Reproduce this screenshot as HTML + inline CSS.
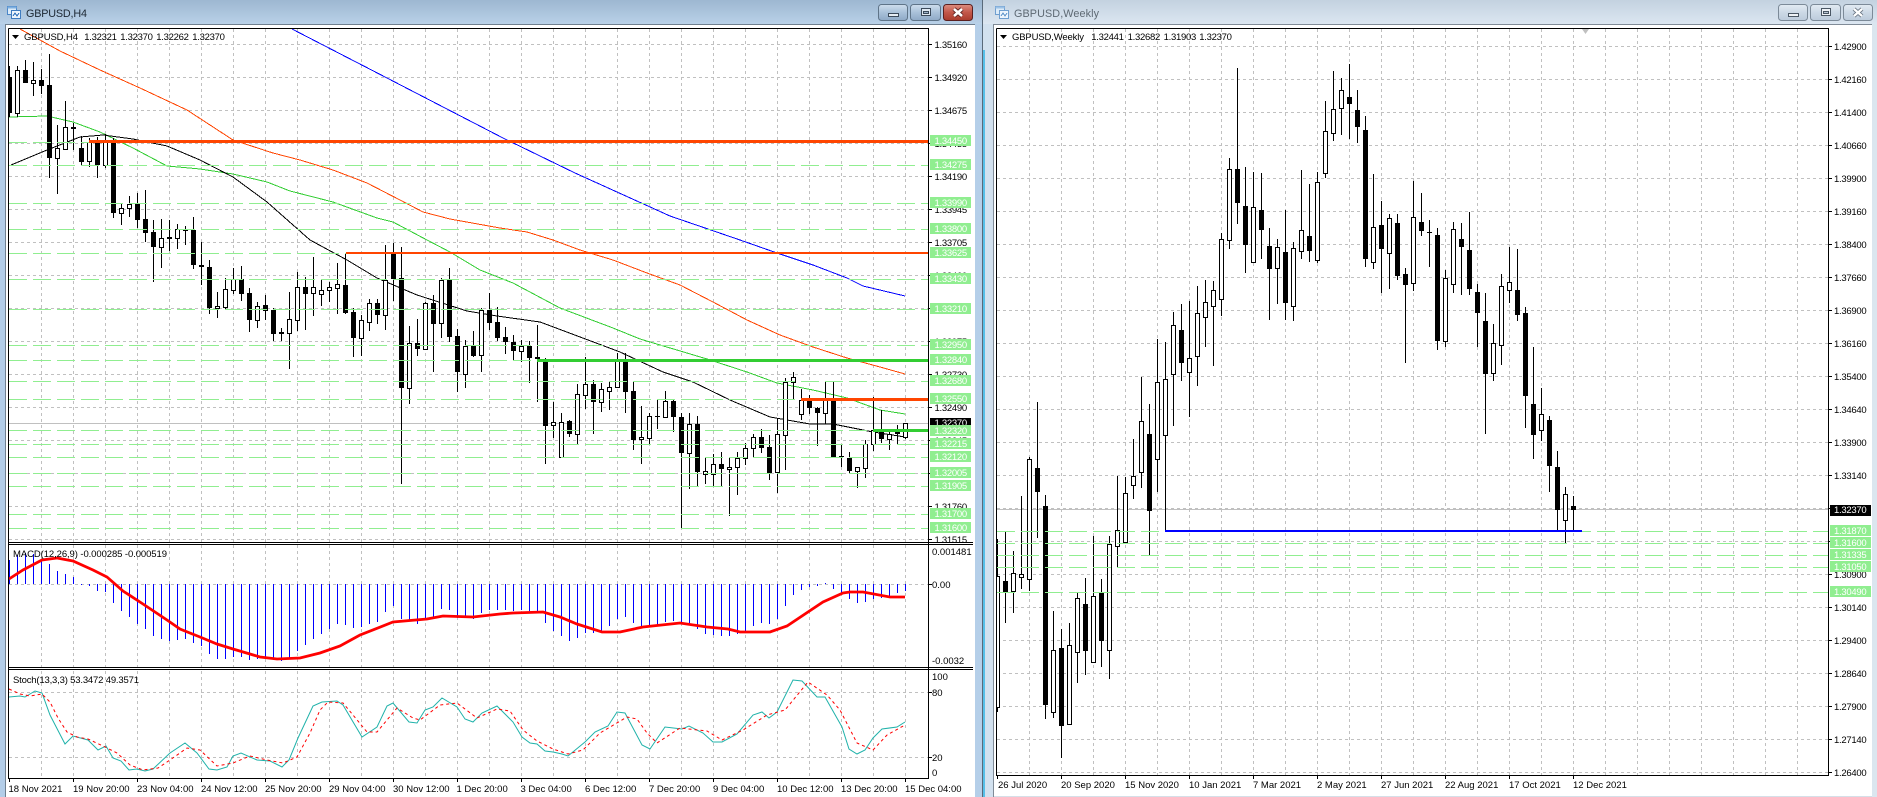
<!DOCTYPE html>
<html><head><meta charset="utf-8"><title>GBPUSD</title>
<style>
html,body{margin:0;padding:0;background:#fff;width:1877px;height:797px;overflow:hidden}
svg{display:block}
text{font-family:"Liberation Sans",sans-serif;font-size:9.5px;fill:#000}
.p{letter-spacing:-.28px}
.w{fill:#fff}
.c{shape-rendering:crispEdges}
.s{fill:none;stroke-width:1}
</style></head><body>
<svg width="1877" height="797" viewBox="0 0 1877 797" xmlns="http://www.w3.org/2000/svg">
<defs>
<linearGradient id="ta" x1="0" y1="0" x2="0" y2="1"><stop offset="0" stop-color="#9db7d1"/><stop offset="1" stop-color="#b9d1e8"/></linearGradient>
<linearGradient id="ti" x1="0" y1="0" x2="0" y2="1"><stop offset="0" stop-color="#c3d2e0"/><stop offset="1" stop-color="#dbe6f1"/></linearGradient>
<linearGradient id="b" x1="0" y1="0" x2="0" y2="1"><stop offset="0" stop-color="#cfdeed"/><stop offset=".5" stop-color="#a9c1d9"/><stop offset="1" stop-color="#8ea9c6"/></linearGradient>
<linearGradient id="bi" x1="0" y1="0" x2="0" y2="1"><stop offset="0" stop-color="#e3ebf3"/><stop offset=".5" stop-color="#ccd9e6"/><stop offset="1" stop-color="#bccbdb"/></linearGradient>
<linearGradient id="r" x1="0" y1="0" x2="0" y2="1"><stop offset="0" stop-color="#dd8d80"/><stop offset=".5" stop-color="#c2574a"/><stop offset="1" stop-color="#a93b2d"/></linearGradient>
<pattern id="v1" patternUnits="userSpaceOnUse" x="41" y="29" width="32" height="6"><rect x="0" y="0" width="1" height="3" fill="#c0c0c0"/></pattern>
<pattern id="h1" patternUnits="userSpaceOnUse" x="9" y="44" width="6" height="33"><rect x="0" y="0" width="3" height="1" fill="#c0c0c0"/></pattern>
<pattern id="v2" patternUnits="userSpaceOnUse" x="1029" y="29" width="32" height="6"><rect x="0" y="0" width="1" height="3" fill="#c0c0c0"/></pattern>
<pattern id="h2" patternUnits="userSpaceOnUse" x="997" y="46" width="6" height="33"><rect x="0" y="0" width="3" height="1" fill="#c0c0c0"/></pattern>
</defs>

<!-- window chrome -->
<rect width="1877" height="797" fill="#fff"/>
<rect x="0" y="0" width="983" height="24" fill="url(#ta)"/>
<rect x="983" y="0" width="894" height="24" fill="url(#ti)"/>
<g class="c">
<rect x="0" y="24" width="5" height="773" fill="#b3cde8"/>
<rect x="5" y="24" width="1" height="773" fill="#6f7f8f"/>
<rect x="5" y="24" width="970" height="1" fill="#6f7f8f"/>
<rect x="975" y="24" width="7" height="773" fill="#b5cfe9"/>
<rect x="982" y="0" width="1" height="797" fill="#5a6a7a"/>
<rect x="983" y="24" width="10" height="773" fill="#d2e1ef"/>
<rect x="983" y="50" width="2" height="747" fill="#55bfe8"/>
<rect x="993" y="24" width="1" height="773" fill="#808b97"/>
<rect x="993" y="24" width="879" height="1" fill="#808b97"/>
<rect x="1872" y="24" width="5" height="773" fill="#dbe6ef"/>
<rect x="994" y="796" width="878" height="1" fill="#d5dfe8"/>
</g>

<!-- icons -->
<g class="c">
<rect x="7.5" y="6.5" width="9" height="8" fill="#dcebf8" stroke="#4a86c8"/>
<rect x="11.5" y="10.5" width="9" height="8" fill="#eef6fd" stroke="#3f7cc0"/>
<path d="M13 16l2-3 2 3 2-3" fill="none" stroke="#3f7cc0"/>
<rect x="7.5" y="6.5" width="9" height="2" fill="#7fb0e0"/>
<rect x="955.5" y="6.5" width="0" height="0"/>
<rect x="995.5" y="6.5" width="9" height="8" fill="#dcebf8" stroke="#6f9fd0"/>
<rect x="999.5" y="10.5" width="9" height="8" fill="#eef6fd" stroke="#6f9fd0"/>
<path d="M1001 16l2-3 2 3 2-3" fill="none" stroke="#6f9fd0"/>
<rect x="995.5" y="6.5" width="9" height="2" fill="#9cc2e6"/>
</g>

<!-- window titles -->
<text x="26" y="17" style="font-size:10.8px;fill:#1c2733" textLength="61">GBPUSD,H4</text>
<text x="1014" y="17" style="font-size:10.8px;fill:#5e6973" textLength="85">GBPUSD,Weekly</text>

<!-- buttons left -->
<rect x="878.5" y="4.5" width="29" height="16" rx="3" fill="url(#b)" stroke="#5f7488"/>
<rect x="888.5" y="13.5" width="10" height="3" fill="#e6edf4" stroke="#3b4a5a" class="c"/>
<rect x="910.5" y="4.5" width="30" height="16" rx="3" fill="url(#b)" stroke="#5f7488"/>
<rect x="921.5" y="8.5" width="9" height="7" fill="#dfe8f1" stroke="#3b4a5a" class="c"/>
<rect x="923.5" y="11.5" width="5" height="2" fill="#9db4cb" stroke="#3b4a5a" class="c"/>
<rect x="943.5" y="4.5" width="29" height="16" rx="3" fill="url(#r)" stroke="#5a2020"/>
<path d="M954 9l8 7M962 9l-8 7" stroke="#5a2020" stroke-width="4.4" fill="none"/>
<path d="M954 9l8 7M962 9l-8 7" stroke="#fff" stroke-width="2.6" fill="none"/>

<!-- buttons right -->
<rect x="1778.5" y="4.5" width="29" height="16" rx="3" fill="url(#bi)" stroke="#7c8a98"/>
<rect x="1788.5" y="13.5" width="10" height="3" fill="#eef2f6" stroke="#4a5764" class="c"/>
<rect x="1810.5" y="4.5" width="30" height="16" rx="3" fill="url(#bi)" stroke="#7c8a98"/>
<rect x="1821.5" y="8.5" width="9" height="7" fill="#eef2f6" stroke="#4a5764" class="c"/>
<rect x="1823.5" y="11.5" width="5" height="2" fill="#b8c6d4" stroke="#4a5764" class="c"/>
<rect x="1843.5" y="4.5" width="29" height="16" rx="3" fill="url(#bi)" stroke="#7c8a98"/>
<path d="M1854 9l8 7M1862 9l-8 7" stroke="#6b7785" stroke-width="4" fill="none"/>
<path d="M1854 9l8 7M1862 9l-8 7" stroke="#fff" stroke-width="2.2" fill="none"/>

<!-- LEFT grids -->
<rect x="41" y="29" width="887" height="513" fill="url(#v1)"/>
<rect x="9" y="29" width="919" height="513" fill="url(#h1)"/>
<rect x="41" y="545" width="887" height="122" fill="url(#v1)"/>
<rect x="41" y="670" width="887" height="108" fill="url(#v1)"/>
<path class="c" d="M9 584.5H928M9 692.5H928M9 757.5H928" stroke="#c0c0c0" stroke-dasharray="3 3" fill="none"/>

<!-- LEFT price line -->
<path class="c" d="M9 423.5H928" stroke="#c0c0c0" fill="none"/>

<!-- LEFT MAs -->
<polyline class="s c" stroke="#0000ff" points="292,29 387,78 503,138 575,173 670,216 740,240 777,253 813,265 847,278 863,286 905,296"/>
<polyline class="s c" stroke="#ff4500" points="20,29 60,51 100,70 140,88 187,110 233,140 273,153 300,160 333,170 367,183 400,200 423,212 450,219 500,228 527,232 553,240 580,250 613,260 647,273 680,285 713,302 747,320 780,335 813,347 847,358 880,367 905,374"/>
<polyline class="s c" stroke="#32cd32" points="9,117 47,116 73,122 100,132 133,148 167,166 200,169 233,174 267,182 290,191 333,202 377,218 393,222 427,240 450,252 480,270 513,283 560,308 613,328 640,339 707,359 747,372 777,383 813,390 847,398 880,410 905,414"/>
<polyline class="s c" stroke="#000" points="11,165 47,150 80,137 103,135 133,139 167,146 200,160 233,177 267,202 310,240 347,260 377,278 417,295 467,311 497,316 540,322 580,337 620,352 663,372 693,382 730,400 770,417 810,424 833,424 873,432 905,437"/>

<!-- LEFT candles -->
<path class="c" fill="none" stroke="#000" d="M9.5 66V117M17.5 66V117M25.5 60V83M33.5 62V96M41.5 69V94M49.5 54V178M57.5 125V194M65.5 101V150M73.5 123V150M81.5 136V165M89.5 138V167M97.5 137V178M105.5 134V168M113.5 138V218M121.5 203V225M129.5 196V217M137.5 193V228M145.5 190V242M153.5 220V282M161.5 219V268M169.5 220V251M177.5 224V249M185.5 226V245M193.5 217V269M201.5 242V285M209.5 260V314M217.5 292V318M225.5 278V309M233.5 268V294M241.5 266V301M249.5 288V332M257.5 302V328M265.5 295V320M273.5 308V341M281.5 328V341M289.5 292V369M297.5 272V331M305.5 277V330M313.5 257V316M321.5 279V306M329.5 282V302M337.5 263V314M345.5 253V314M353.5 308V357M361.5 315V356M369.5 299V331M377.5 299V324M385.5 245V330M393.5 243V301M401.5 247V484M409.5 326V404M417.5 319V356M425.5 302V350M433.5 295V372M441.5 278V338M449.5 268V342M457.5 329V392M465.5 340V388M473.5 331V357M481.5 308V372M489.5 293V330M497.5 307V341M505.5 327V354M513.5 335V360M521.5 340V362M529.5 341V383M537.5 325V402M545.5 358V464M553.5 402V438M561.5 413V457M569.5 420V437M577.5 384V444M585.5 357V409M593.5 380V434M601.5 383V412M609.5 382V410M617.5 353V388M625.5 353V413M633.5 382V450M641.5 406V464M649.5 413V445M657.5 400V429M665.5 391V417M673.5 400V432M681.5 413V528M689.5 413V489M697.5 416V487M705.5 458V484M713.5 454V486M721.5 452V486M729.5 458V516M737.5 452V495M745.5 443V465M753.5 434V457M761.5 429V453M769.5 435V480M777.5 418V493M785.5 378V470M793.5 372V399M801.5 389V420M809.5 395V414M817.5 407V446M825.5 382V424M833.5 382V458M841.5 445V467M849.5 452V473M857.5 467V488M865.5 440V478M873.5 397V451M881.5 410V443M889.5 430V450M897.5 425V444M905.5 423V439"/>
<path class="c" fill="#000" d="M9 77h3v36h-3zM23 70h5v13h-5zM39 80h5v6h-5zM47 85h5v73h-5zM71 127h5v2h-5zM79 148h5v14h-5zM95 142h5v23h-5zM111 142h5v71h-5zM135 204h5v16h-5zM143 219h5v14h-5zM151 232h5v15h-5zM167 237h5v2h-5zM183 230h5v1h-5zM191 230h5v35h-5zM199 265h5v2h-5zM207 267h5v41h-5zM239 279h5v15h-5zM247 293h5v27h-5zM263 305h5v6h-5zM271 310h5v24h-5zM279 332h5v2h-5zM303 287h5v7h-5zM343 285h5v28h-5zM351 312h5v26h-5zM375 303h5v12h-5zM391 253h5v26h-5zM399 278h5v110h-5zM415 343h5v6h-5zM431 303h5v21h-5zM447 280h5v57h-5zM455 336h5v36h-5zM471 346h5v10h-5zM487 310h5v13h-5zM495 322h5v16h-5zM503 337h5v5h-5zM511 342h5v9h-5zM527 346h5v12h-5zM535 357h5v2h-5zM543 360h5v66h-5zM567 421h5v13h-5zM591 384h5v18h-5zM623 362h5v30h-5zM631 391h5v49h-5zM655 416h5v1h-5zM671 401h5v16h-5zM679 417h5v36h-5zM695 424h5v48h-5zM719 464h5v5h-5zM759 437h5v11h-5zM767 447h5v26h-5zM807 400h5v8h-5zM815 408h5v5h-5zM831 400h5v57h-5zM839 456h5v1h-5zM847 458h5v13h-5zM879 432h5v7h-5z"/>
<path class="c" fill="#fff" stroke="#000" d="M15.5 70.5h4v43h-4zM31.5 80.5h4v3h-4zM55.5 148.5h4v10h-4zM63.5 127.5h4v22h-4zM87.5 142.5h4v19h-4zM103.5 142.5h4v23h-4zM119.5 208.5h4v5h-4zM127.5 204.5h4v4h-4zM159.5 238.5h4v9h-4zM175.5 229.5h4v9h-4zM215.5 306.5h4v2h-4zM223.5 289.5h4v18h-4zM231.5 279.5h4v11h-4zM255.5 306.5h4v14h-4zM287.5 319.5h4v14h-4zM295.5 287.5h4v33h-4zM311.5 287.5h4v6h-4zM319.5 290.5h4v4h-4zM327.5 287.5h4v3h-4zM335.5 284.5h4v4h-4zM359.5 320.5h4v18h-4zM367.5 303.5h4v19h-4zM383.5 280.5h4v35h-4zM407.5 343.5h4v45h-4zM423.5 303.5h4v46h-4zM439.5 280.5h4v43h-4zM463.5 346.5h4v28h-4zM479.5 310.5h4v45h-4zM519.5 346.5h4v5h-4zM551.5 422.5h4v3h-4zM559.5 422.5h4v35h-4zM575.5 394.5h4v40h-4zM583.5 384.5h4v11h-4zM599.5 389.5h4v13h-4zM607.5 387.5h4v4h-4zM615.5 360.5h4v27h-4zM639.5 437.5h4v2h-4zM647.5 416.5h4v22h-4zM663.5 401.5h4v16h-4zM687.5 424.5h4v29h-4zM703.5 471.5h4v3h-4zM711.5 464.5h4v10h-4zM727.5 467.5h4v2h-4zM735.5 458.5h4v9h-4zM743.5 448.5h4v10h-4zM751.5 437.5h4v11h-4zM775.5 434.5h4v38h-4zM783.5 382.5h4v53h-4zM791.5 377.5h4v5h-4zM799.5 400.5h4v14h-4zM823.5 400.5h4v13h-4zM855.5 467.5h4v4h-4zM863.5 444.5h4v24h-4zM871.5 430.5h4v14h-4zM887.5 434.5h4v5h-4zM895.5 432.5h4v1h-4zM903.5 423.5h4v14h-4z"/>

<!-- LEFT levels -->
<path class="c" fill="none" stroke="#90ee90" stroke-dasharray="18 6" d="M9 142.5H928M9 165.5H928M9 203.5H928M9 229.5H928M9 253.5H928M9 279.5H928M9 309.5H928M9 345.5H928M9 360.5H928M9 381.5H928M9 399.5H928M9 430.5H928M9 444.5H928M9 457.5H928M9 473.5H928M9 486.5H928M9 514.5H928M9 528.5H928"/>
<g class="c">
<rect x="89" y="140" width="839" height="3" fill="#ff4500"/>
<rect x="346" y="252" width="582" height="2" fill="#ff4500"/>
<rect x="537" y="359" width="391" height="3" fill="#32cd32"/>
<rect x="801" y="398" width="127" height="3" fill="#ff4500"/>
<rect x="873" y="429" width="55" height="3" fill="#32cd32"/>
</g>

<!-- MACD -->
<path class="c" fill="none" stroke="#0000ff" d="M9.5 584V560M17.5 584V555M25.5 584V553M33.5 584V554M41.5 584V559M49.5 584V564M57.5 584V571M65.5 584V574M73.5 584V577M81.5 584V585M89.5 584V586M97.5 584V591M105.5 584V592M113.5 584V603M121.5 584V611M129.5 584V617M137.5 584V624M145.5 584V629M153.5 584V636M161.5 584V639M169.5 584V641M177.5 584V640M185.5 584V639M193.5 584V643M201.5 584V646M209.5 584V654M217.5 584V659M225.5 584V659M233.5 584V657M241.5 584V657M249.5 584V660M257.5 584V659M265.5 584V658M273.5 584V660M281.5 584V661M289.5 584V659M297.5 584V651M305.5 584V645M313.5 584V639M321.5 584V634M329.5 584V629M337.5 584V624M345.5 584V625M353.5 584V628M361.5 584V627M369.5 584V624M377.5 584V622M385.5 584V612M393.5 584V606M401.5 584V619M409.5 584V620M417.5 584V624M425.5 584V619M433.5 584V618M441.5 584V609M449.5 584V610M457.5 584V618M465.5 584V617M473.5 584V619M481.5 584V613M489.5 584V610M497.5 584V610M505.5 584V610M513.5 584V611M521.5 584V610M529.5 584V611M537.5 584V612M545.5 584V623M553.5 584V631M561.5 584V636M569.5 584V641M577.5 584V638M585.5 584V633M593.5 584V633M601.5 584V631M609.5 584V626M617.5 584V619M625.5 584V617M633.5 584V623M641.5 584V626M649.5 584V627M657.5 584V625M665.5 584V622M673.5 584V621M681.5 584V623M689.5 584V623M697.5 584V629M705.5 584V634M713.5 584V635M721.5 584V636M729.5 584V636M737.5 584V634M745.5 584V632M753.5 584V626M761.5 584V623M769.5 584V624M777.5 584V619M785.5 584V606M793.5 584V595M801.5 584V590M809.5 584V587M817.5 584V586M825.5 584V583M833.5 584V589M841.5 584V593M849.5 584V599M857.5 584V603M865.5 584V602M873.5 584V599M881.5 584V598M889.5 584V597M897.5 584V593M905.5 584V591"/>
<polyline fill="none" stroke="#ff0000" stroke-width="2.8" points="9,579 23,570 42,560 57,558 73,561 93,570 107,577 123,591 143,604 167,620 180,629 200,637 217,644 233,649 260,657 277,659 300,658 320,653 340,646 360,635 393,622 427,619 443,616 473,617 500,614 513,613 543,612 560,617 577,624 602,632 620,632 643,627 680,623 707,627 728,629 740,632 770,632 787,626 823,602 843,593 850,592 863,592 890,597 905,597"/>

<!-- Stoch -->
<polyline class="s" stroke="#20b2aa" points="9,697 20,696 25,697 35,691 42,693 50,715 65,744 73,736 88,740 98,750 106,746 113,758 121,761 129,770 137,769 145,771 153,769 170,753 185,743 197,753 209,769 217,770 227,767 233,756 241,753 257,760 270,761 282,767 289,760 298,738 313,706 322,702 337,701 343,705 362,737 377,727 387,706 393,703 409,722 417,723 425,710 433,707 442,698 457,707 465,719 473,722 482,713 497,706 513,722 522,737 530,743 537,744 545,751 553,752 562,754 568,756 585,742 595,732 608,726 617,712 625,713 642,745 650,749 665,727 682,729 689,726 703,733 713,742 722,742 737,734 753,715 762,712 769,718 777,712 793,680 802,681 817,697 825,697 842,727 849,749 857,754 865,750 873,738 882,729 897,727 905,722"/>
<polyline class="s" stroke="#ff0000" stroke-dasharray="3 3" points="9,689 20,694 30,696 42,694 50,702 58,718 67,732 77,737 88,739 103,746 117,753 130,765 143,770 158,768 170,760 187,748 200,750 217,766 233,763 250,756 267,760 283,763 297,757 310,733 320,710 328,702 343,703 353,715 367,732 377,732 397,708 413,718 420,720 440,705 457,703 477,718 497,709 510,711 523,730 537,741 553,749 568,754 583,750 600,733 627,717 637,719 647,733 657,743 680,728 707,731 722,740 743,730 767,715 785,710 808,682 827,695 840,710 857,743 873,750 887,735 905,725"/>

<!-- LEFT frame -->
<path class="c" fill="none" stroke="#000" d="M8.5 28.5H928.5V778.5H8.5V28.5M8 542.5H973M8 544.5H973M8 667.5H973M8 669.5H973M928 44.5h4M928 77.5h4M928 110.5h4M928 143.5h4M928 176.5h4M928 209.5h4M928 242.5h4M928 275.5h4M928 308.5h4M928 341.5h4M928 374.5h4M928 407.5h4M928 440.5h4M928 473.5h4M928 506.5h4M928 539.5h4M928 584.5h4M928 692.5h4M928 757.5h4M9.5 778v4M73.5 778v4M137.5 778v4M201.5 778v4M265.5 778v4M329.5 778v4M393.5 778v4M457.5 778v4M521.5 778v4M585.5 778v4M649.5 778v4M713.5 778v4M777.5 778v4M841.5 778v4M905.5 778v4"/>

<!-- LEFT legends -->
<polygon points="12,35 19,35 15.5,39" fill="#000"/>
<text x="24" y="40" textLength="54">GBPUSD,H4</text>
<text class="p" x="84.3" y="40">1.32321</text>
<text class="p" x="120.3" y="40">1.32370</text>
<text class="p" x="156.3" y="40">1.32262</text>
<text class="p" x="192.3" y="40">1.32370</text>
<text x="13" y="557" textLength="154">MACD(12,26,9) -0.000285 -0.000519</text>
<text x="13" y="683" textLength="126">Stoch(13,3,3) 53.3472 49.3571</text>

<!-- LEFT axis labels -->
<g class="p">
<text x="934.5" y="48">1.35160</text>
<text x="934.5" y="81">1.34920</text>
<text x="934.5" y="114">1.34675</text>
<text x="934.5" y="147">1.34435</text>
<text x="934.5" y="180">1.34190</text>
<text x="934.5" y="213">1.33945</text>
<text x="934.5" y="246">1.33705</text>
<text x="934.5" y="279">1.33460</text>
<text x="934.5" y="312">1.33220</text>
<text x="934.5" y="345">1.32975</text>
<text x="934.5" y="378">1.32730</text>
<text x="934.5" y="411">1.32490</text>
<text x="934.5" y="444">1.32245</text>
<text x="934.5" y="477">1.32000</text>
<text x="934.5" y="510">1.31760</text>
<text x="934.5" y="543">1.31515</text>
</g>
<text x="932" y="555" class="p" style="letter-spacing:0">0.001481</text>
<text x="932" y="588" class="p" style="letter-spacing:0">0.00</text>
<text x="932" y="664" class="p" style="letter-spacing:0">-0.0032</text>
<text x="932" y="680">100</text>
<text x="932" y="696">80</text>
<text x="932" y="761">20</text>
<text x="932" y="776">0</text>

<!-- LEFT value boxes -->
<rect class="c" x="930" y="418" width="41" height="11" fill="#000"/>
<text class="p w" x="934.5" y="426">1.32370</text>
<g class="c" fill="#90ee90">
<rect x="930" y="135" width="41" height="11"/><rect x="930" y="159" width="41" height="11"/><rect x="930" y="197" width="41" height="11"/><rect x="930" y="223" width="41" height="11"/><rect x="930" y="247" width="41" height="11"/><rect x="930" y="273" width="41" height="11"/><rect x="930" y="303" width="41" height="11"/><rect x="930" y="339" width="41" height="11"/><rect x="930" y="354" width="41" height="11"/><rect x="930" y="375" width="41" height="11"/><rect x="930" y="393" width="41" height="11"/><rect x="930" y="425" width="41" height="11"/><rect x="930" y="438" width="41" height="11"/><rect x="930" y="451" width="41" height="11"/><rect x="930" y="467" width="41" height="11"/><rect x="930" y="480" width="41" height="11"/><rect x="930" y="508" width="41" height="11"/><rect x="930" y="522" width="41" height="11"/>
</g>
<g class="p">
<text class="w" x="934.5" y="144">1.34450</text>
<text class="w" x="934.5" y="168">1.34275</text>
<text class="w" x="934.5" y="206">1.33990</text>
<text class="w" x="934.5" y="232">1.33800</text>
<text class="w" x="934.5" y="256">1.33625</text>
<text class="w" x="934.5" y="282">1.33430</text>
<text class="w" x="934.5" y="312">1.33210</text>
<text class="w" x="934.5" y="348">1.32950</text>
<text class="w" x="934.5" y="363">1.32840</text>
<text class="w" x="934.5" y="384">1.32680</text>
<text class="w" x="934.5" y="402">1.32550</text>
<text class="w" x="934.5" y="434">1.32320</text>
<text class="w" x="934.5" y="447">1.32215</text>
<text class="w" x="934.5" y="460">1.32120</text>
<text class="w" x="934.5" y="476">1.32005</text>
<text class="w" x="934.5" y="489">1.31905</text>
<text class="w" x="934.5" y="517">1.31700</text>
<text class="w" x="934.5" y="531">1.31600</text>
</g>

<!-- LEFT time labels -->
<g>
<text x="8.5" y="792">18 Nov 2021</text>
<text x="73" y="792">19 Nov 20:00</text>
<text x="137" y="792">23 Nov 04:00</text>
<text x="201" y="792">24 Nov 12:00</text>
<text x="265" y="792">25 Nov 20:00</text>
<text x="329" y="792">29 Nov 04:00</text>
<text x="393" y="792">30 Nov 12:00</text>
<text x="456.5" y="792">1 Dec 20:00</text>
<text x="520.5" y="792">3 Dec 04:00</text>
<text x="585" y="792">6 Dec 12:00</text>
<text x="649" y="792">7 Dec 20:00</text>
<text x="713" y="792">9 Dec 04:00</text>
<text x="777" y="792">10 Dec 12:00</text>
<text x="841" y="792">13 Dec 20:00</text>
<text x="905" y="792">15 Dec 04:00</text>
</g>

<!-- RIGHT grids -->
<rect x="1029" y="29" width="799" height="746" fill="url(#v2)"/>
<rect x="997" y="29" width="831" height="746" fill="url(#h2)"/>
<path class="c" d="M997 509.5H1828" stroke="#c0c0c0" fill="none"/>
<polygon points="1582,29 1589,29 1585.5,34" fill="#c0c0c0"/>

<!-- RIGHT candles -->
<path class="c" fill="none" stroke="#000" d="M997.5 539V712M1005.5 532V623M1013.5 551V613M1021.5 496V589M1029.5 457V591M1037.5 402V538M1045.5 495V719M1053.5 611V718M1061.5 629V758M1069.5 623V724M1077.5 593V683M1085.5 578V675M1093.5 536V663M1101.5 579V667M1109.5 536V679M1117.5 476V567M1125.5 477V542M1133.5 439V499M1141.5 377V488M1149.5 404V555M1157.5 339V492M1165.5 342V531M1173.5 312V426M1181.5 304V381M1189.5 301V417M1197.5 286V386M1205.5 280V347M1213.5 281V366M1221.5 233V316M1229.5 158V249M1237.5 68V224M1245.5 167V273M1253.5 172V262M1261.5 173V259M1269.5 228V320M1277.5 239V304M1285.5 210V320M1293.5 242V321M1301.5 170V259M1309.5 184V262M1317.5 172V263M1325.5 101V178M1333.5 71V141M1341.5 78V135M1349.5 64V139M1357.5 90V143M1365.5 116V267M1373.5 174V269M1381.5 201V293M1389.5 214V289M1397.5 214V280M1405.5 268V363M1413.5 181V291M1421.5 193V236M1429.5 220V267M1437.5 228V350M1445.5 270V347M1453.5 222V293M1461.5 223V295M1469.5 212V295M1477.5 284V347M1485.5 293V434M1493.5 324V381M1501.5 274V365M1509.5 247V303M1517.5 249V321M1525.5 307V428M1533.5 347V459M1541.5 388V441M1549.5 416V492M1557.5 451V531M1565.5 487V543M1573.5 496V531"/>
<path class="c" fill="#000" d="M1003 581h5v11h-5zM1035 468h5v24h-5zM1043 506h5v199h-5zM1059 648h5v78h-5zM1083 604h5v47h-5zM1099 593h5v48h-5zM1147 434h5v77h-5zM1179 330h5v33h-5zM1235 169h5v34h-5zM1243 206h5v39h-5zM1259 210h5v20h-5zM1267 246h5v23h-5zM1283 252h5v51h-5zM1307 236h5v15h-5zM1347 97h5v7h-5zM1355 110h5v17h-5zM1363 130h5v129h-5zM1379 225h5v24h-5zM1395 223h5v53h-5zM1403 274h5v11h-5zM1419 222h5v9h-5zM1427 232h5v1h-5zM1435 235h5v106h-5zM1459 239h5v8h-5zM1467 250h5v39h-5zM1475 292h5v21h-5zM1483 321h5v53h-5zM1515 290h5v25h-5zM1523 313h5v83h-5zM1531 404h5v31h-5zM1547 420h5v46h-5zM1555 467h5v43h-5zM1571 506h5v4h-5z"/>
<path class="c" fill="#fff" stroke="#000" d="M996.5 576.5h3v131h-3zM1011.5 573.5h4v18h-4zM1019.5 574.5h4v3h-4zM1027.5 459.5h4v120h-4zM1051.5 650.5h4v62h-4zM1067.5 645.5h4v79h-4zM1075.5 598.5h4v54h-4zM1091.5 596.5h4v66h-4zM1107.5 544.5h4v106h-4zM1115.5 530.5h4v16h-4zM1123.5 493.5h4v49h-4zM1131.5 476.5h4v9h-4zM1139.5 421.5h4v51h-4zM1155.5 382.5h4v77h-4zM1163.5 379.5h4v56h-4zM1171.5 325.5h4v49h-4zM1187.5 358.5h4v14h-4zM1195.5 313.5h4v43h-4zM1203.5 302.5h4v15h-4zM1211.5 290.5h4v16h-4zM1219.5 239.5h4v60h-4zM1227.5 169.5h4v71h-4zM1251.5 207.5h4v55h-4zM1275.5 247.5h4v21h-4zM1291.5 248.5h4v58h-4zM1299.5 230.5h4v21h-4zM1315.5 182.5h4v78h-4zM1323.5 131.5h4v42h-4zM1331.5 109.5h4v24h-4zM1339.5 90.5h4v18h-4zM1371.5 227.5h4v35h-4zM1387.5 218.5h4v35h-4zM1411.5 217.5h4v66h-4zM1443.5 278.5h4v63h-4zM1451.5 229.5h4v55h-4zM1491.5 343.5h4v30h-4zM1499.5 286.5h4v59h-4zM1507.5 282.5h4v8h-4zM1539.5 414.5h4v16h-4zM1563.5 494.5h4v26h-4z"/>

<!-- RIGHT levels -->
<path class="c" fill="none" stroke="#90ee90" stroke-dasharray="18 6" d="M997 531.5H1828M997 543.5H1828M997 555.5H1828M997 567.5H1828M997 592.5H1828"/>
<rect class="c" x="1165" y="530" width="417" height="2" fill="#0000ff"/>

<!-- RIGHT frame -->
<path class="c" fill="none" stroke="#000" d="M996.5 28.5H1828.5V775.5H996.5V28.5M1828 46.5h4M1828 79.5h4M1828 112.5h4M1828 145.5h4M1828 178.5h4M1828 211.5h4M1828 244.5h4M1828 277.5h4M1828 310.5h4M1828 343.5h4M1828 376.5h4M1828 409.5h4M1828 442.5h4M1828 475.5h4M1828 508.5h4M1828 541.5h4M1828 574.5h4M1828 607.5h4M1828 640.5h4M1828 673.5h4M1828 706.5h4M1828 739.5h4M1828 772.5h4M997.5 775v4M1061.5 775v4M1125.5 775v4M1189.5 775v4M1253.5 775v4M1317.5 775v4M1381.5 775v4M1445.5 775v4M1509.5 775v4M1573.5 775v4"/>

<!-- RIGHT legend -->
<polygon points="1000,35 1007,35 1003.5,39" fill="#000"/>
<text x="1012" y="40" textLength="72">GBPUSD,Weekly</text>
<text class="p" x="1091.3" y="40">1.32441</text>
<text class="p" x="1127.6" y="40">1.32682</text>
<text class="p" x="1163.6" y="40">1.31903</text>
<text class="p" x="1199.3" y="40">1.32370</text>

<!-- RIGHT axis labels -->
<g class="p">
<text x="1834" y="50">1.42900</text>
<text x="1834" y="83">1.42160</text>
<text x="1834" y="116">1.41400</text>
<text x="1834" y="149">1.40660</text>
<text x="1834" y="182">1.39900</text>
<text x="1834" y="215">1.39160</text>
<text x="1834" y="248">1.38400</text>
<text x="1834" y="281">1.37660</text>
<text x="1834" y="314">1.36900</text>
<text x="1834" y="347">1.36160</text>
<text x="1834" y="380">1.35400</text>
<text x="1834" y="413">1.34640</text>
<text x="1834" y="446">1.33900</text>
<text x="1834" y="479">1.33140</text>
<text x="1834" y="578">1.30900</text>
<text x="1834" y="611">1.30140</text>
<text x="1834" y="644">1.29400</text>
<text x="1834" y="677">1.28640</text>
<text x="1834" y="710">1.27900</text>
<text x="1834" y="743">1.27140</text>
<text x="1834" y="776">1.26400</text>
</g>
<g class="c">
<rect x="1830" y="505" width="41" height="11" fill="#000"/>
<rect x="1830" y="525" width="41" height="11" fill="#90ee90"/>
<rect x="1830" y="537" width="41" height="11" fill="#90ee90"/>
<rect x="1830" y="549" width="41" height="11" fill="#90ee90"/>
<rect x="1830" y="561" width="41" height="11" fill="#90ee90"/>
<rect x="1830" y="586" width="41" height="11" fill="#90ee90"/>
</g>
<g class="p">
<text class="w" x="1834" y="513">1.32370</text>
<text class="w" x="1834" y="534">1.31870</text>
<text class="w" x="1834" y="546">1.31600</text>
<text class="w" x="1834" y="558">1.31335</text>
<text class="w" x="1834" y="570">1.31050</text>
<text class="w" x="1834" y="595">1.30490</text>
</g>

<!-- RIGHT time labels -->
<text x="998" y="788">26 Jul 2020</text>
<text x="1061" y="788">20 Sep 2020</text>
<text x="1125" y="788">15 Nov 2020</text>
<text x="1189" y="788">10 Jan 2021</text>
<text x="1253" y="788">7 Mar 2021</text>
<text x="1317" y="788">2 May 2021</text>
<text x="1381" y="788">27 Jun 2021</text>
<text x="1445" y="788">22 Aug 2021</text>
<text x="1509" y="788">17 Oct 2021</text>
<text x="1573" y="788">12 Dec 2021</text>
</svg>
</body></html>
